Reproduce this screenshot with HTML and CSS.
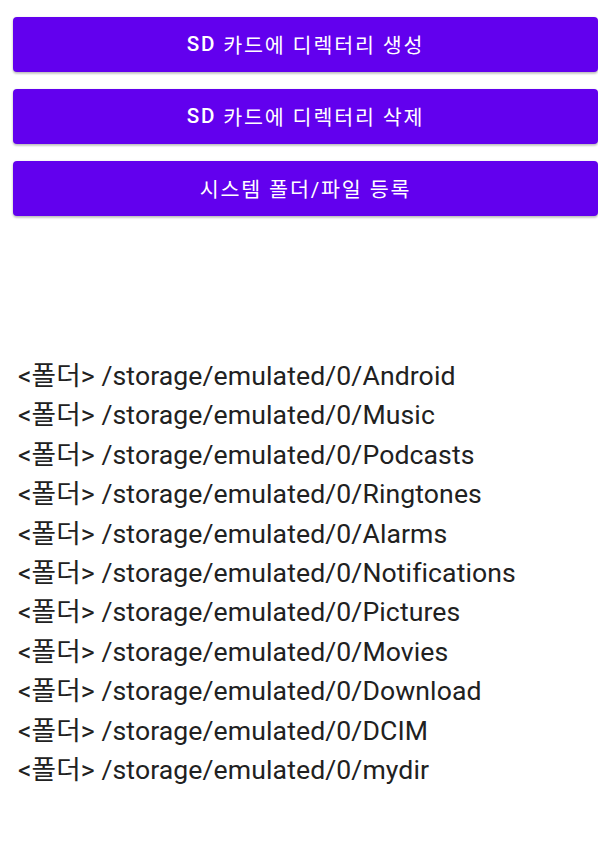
FILE: index.html
```html
<!DOCTYPE html>
<html lang="ko">
<head>
<meta charset="utf-8">
<link rel="stylesheet" href="styles.css">
</head>
<body>
<div class="screen">
  <div class="buttons">
    <button class="btn">SD <span class="ko">카드에 디렉터리 생성</span></button>
    <button class="btn">SD <span class="ko">카드에 디렉터리 삭제</span></button>
    <button class="btn"><span class="ko">시스템 폴더/파일 등록</span></button>
  </div>
  <div class="list">
    <div class="row">&lt;폴더&gt; /storage/emulated/0/Android</div>
    <div class="row">&lt;폴더&gt; /storage/emulated/0/Music</div>
    <div class="row">&lt;폴더&gt; /storage/emulated/0/Podcasts</div>
    <div class="row">&lt;폴더&gt; /storage/emulated/0/Ringtones</div>
    <div class="row">&lt;폴더&gt; /storage/emulated/0/Alarms</div>
    <div class="row">&lt;폴더&gt; /storage/emulated/0/Notifications</div>
    <div class="row">&lt;폴더&gt; /storage/emulated/0/Pictures</div>
    <div class="row">&lt;폴더&gt; /storage/emulated/0/Movies</div>
    <div class="row">&lt;폴더&gt; /storage/emulated/0/Download</div>
    <div class="row">&lt;폴더&gt; /storage/emulated/0/DCIM</div>
    <div class="row">&lt;폴더&gt; /storage/emulated/0/mydir</div>
  </div>
</div>
</body>
</html>
```
FILE: styles.css
```css
html, body {
  margin: 0;
  padding: 0;
  background: #ffffff;
}
.screen {
  padding: 17px 0 0 13px;
  font-family: Roboto, "Noto Sans CJK KR", sans-serif;
}
.buttons {
  display: flex;
  flex-direction: column;
  gap: 17px;
}
.btn {
  display: flex;
  align-items: center;
  justify-content: center;
  white-space: pre;
  height: 55px;
  width: 100%;
  border: none;
  border-radius: 4px;
  background: #6200ee;
  color: #ffffff;
  font-family: Roboto, "Noto Sans CJK KR", sans-serif;
  font-weight: 500;
  font-size: 20.6px;
  letter-spacing: 0.09em;
  padding: 0 0 1px;
  box-shadow: 0 1px 3px rgba(0,0,0,0.2), 0 2px 2px rgba(0,0,0,0.12);
}
.ko {
  font-weight: 400;
}
.list {
  margin-top: 140px;
  padding-left: 5px;
  color: #212121;
  font-size: 26.6px;
  letter-spacing: 0.1px;
  line-height: 39.4px;
}
.row {
  white-space: nowrap;
}
```
